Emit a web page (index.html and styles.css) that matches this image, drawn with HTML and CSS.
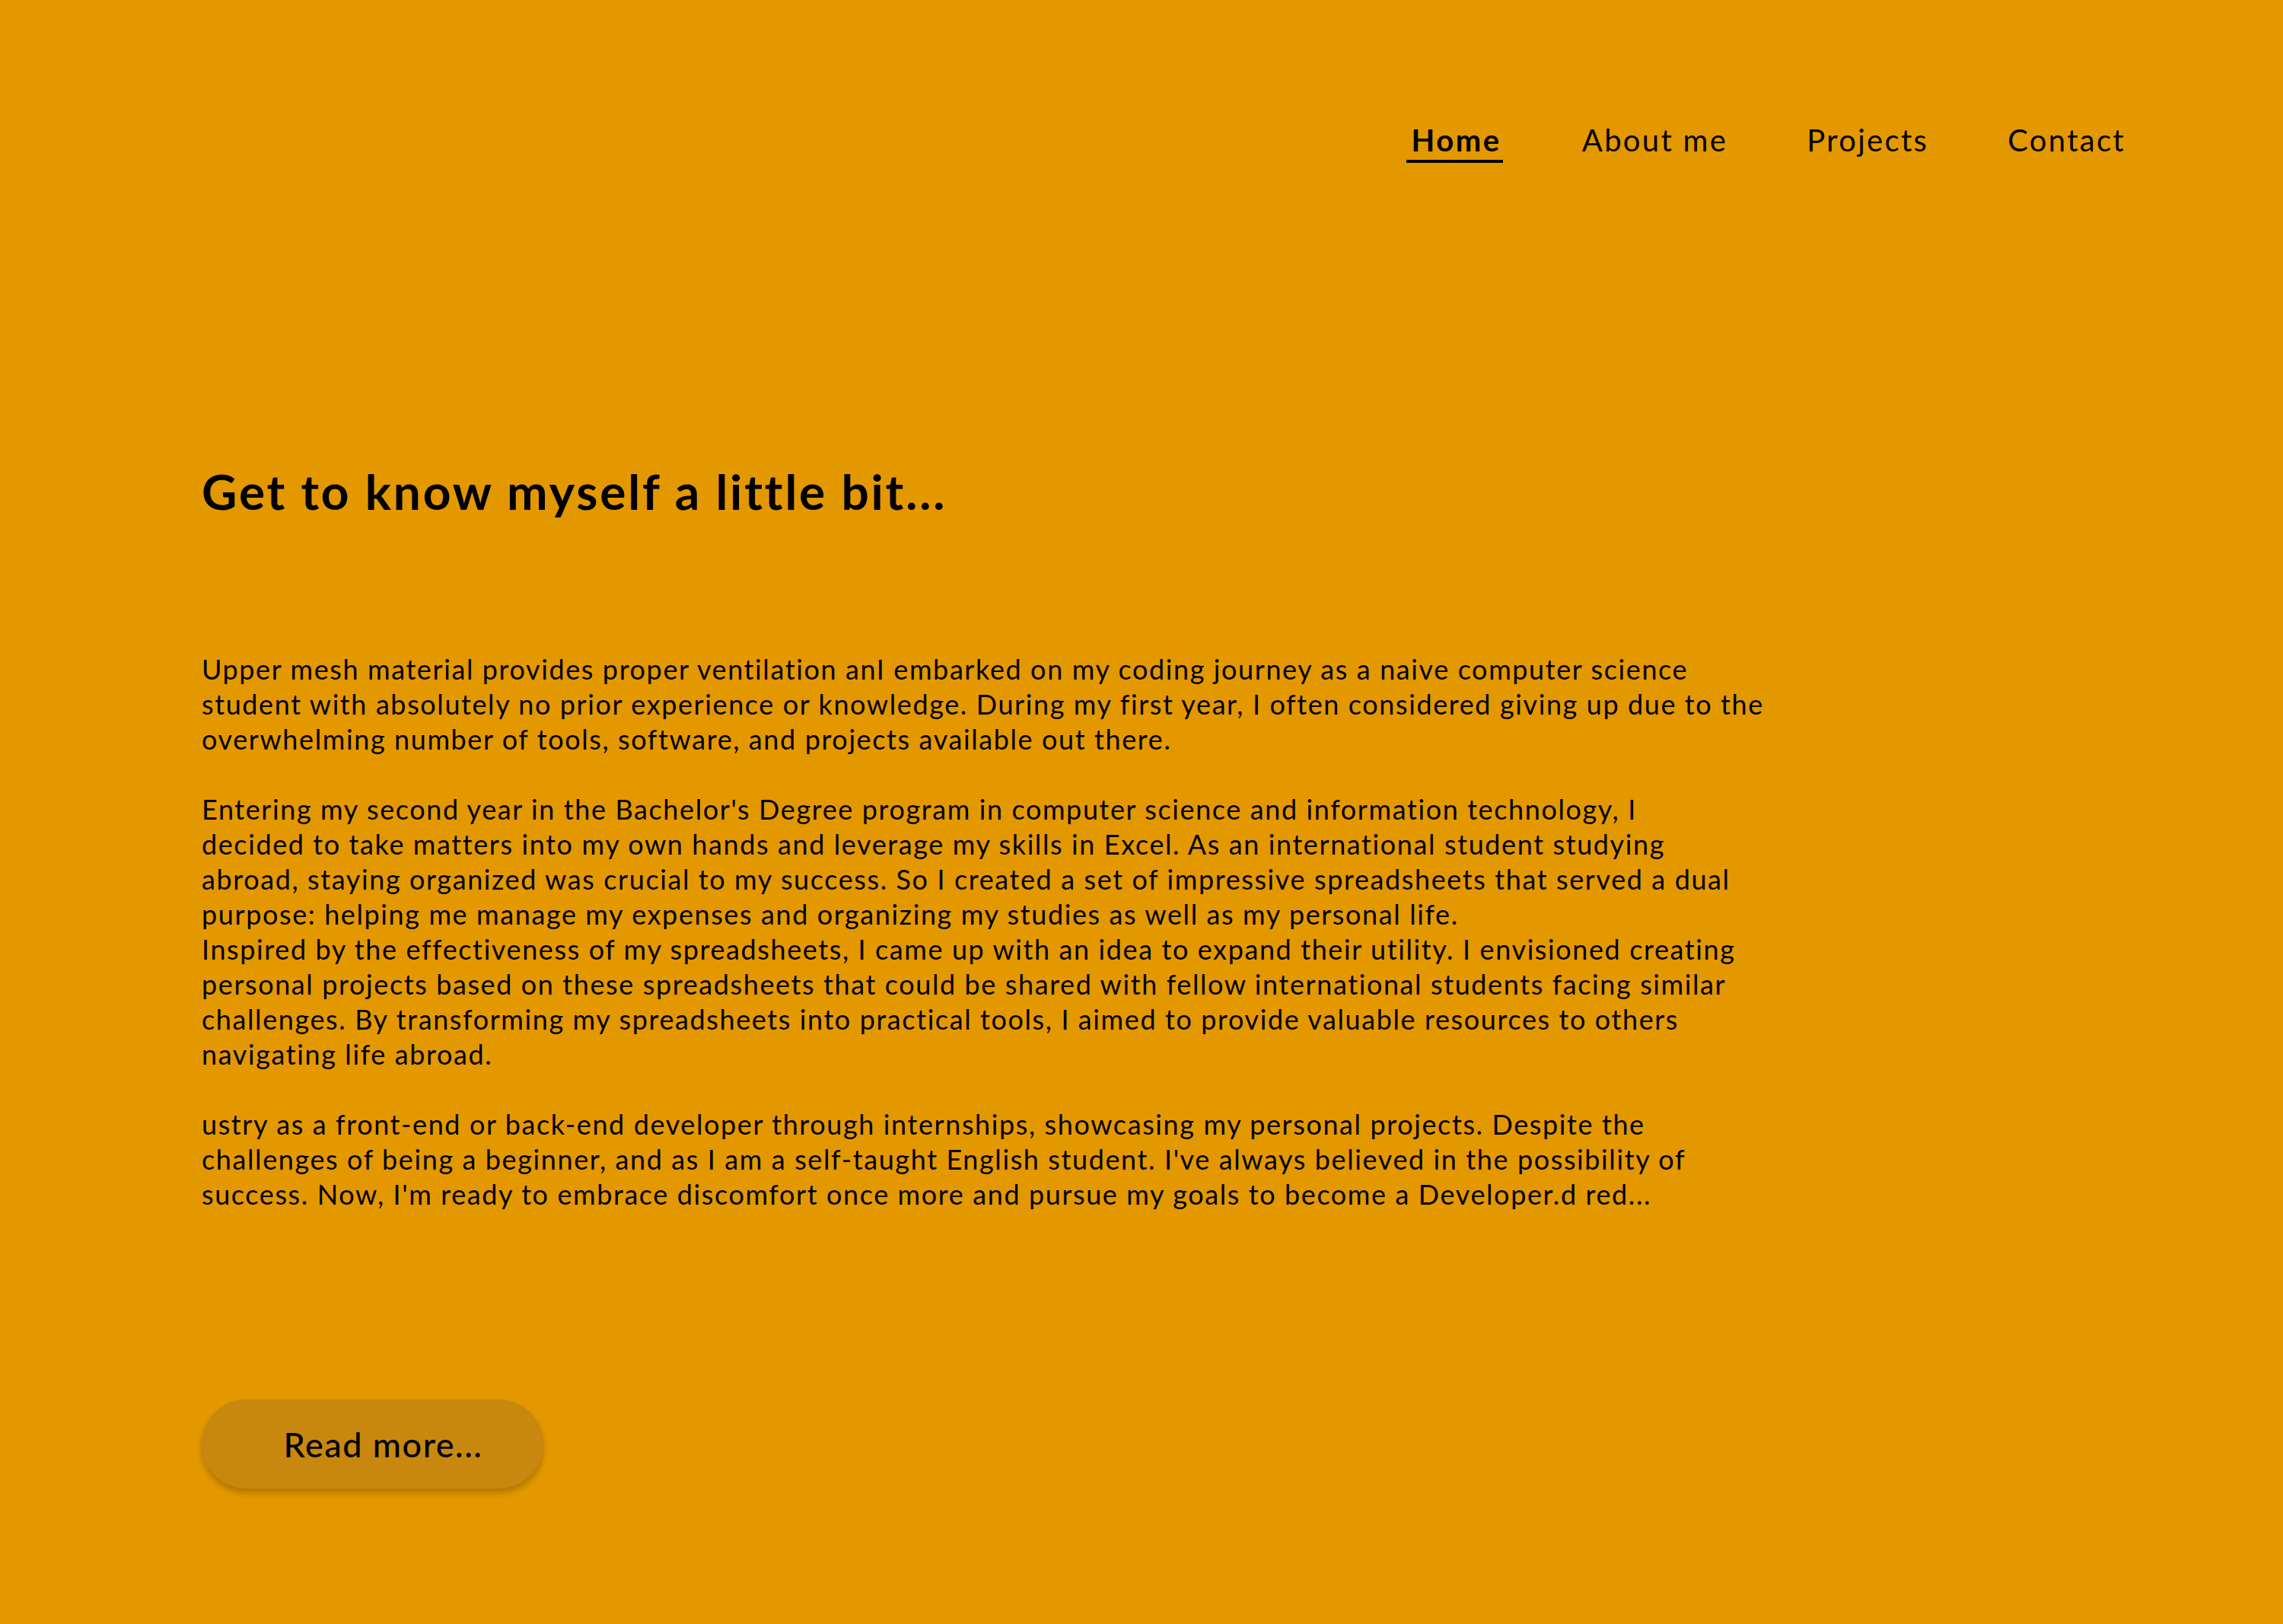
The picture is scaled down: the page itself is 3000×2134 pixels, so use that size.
FILE: index.html
```html
<!DOCTYPE html>
<html lang="en">
<head>
<meta charset="utf-8">
<title>About me</title>
<link rel="stylesheet" href="styles.css">
</head>
<body>
<header class="site-header">
  <nav class="nav">
    <a class="nav-link active" href="#">Home</a>
    <a class="nav-link" href="#">About me</a>
    <a class="nav-link" href="#">Projects</a>
    <a class="nav-link" href="#">Contact</a>
  </nav>
</header>
<main class="about">
  <h1 class="about-title">Get to know myself a little bit...</h1>
  <div class="about-text">
    <p>Upper mesh material provides proper ventilation anI embarked on my coding journey as a naive computer science<br>
    student with absolutely no prior experience or knowledge. During my first year, I often considered giving up due to the<br>
    overwhelming number of tools, software, and projects available out there.</p>
    <p>Entering my second year in the Bachelor's Degree program in computer science and information technology, I<br>
    decided to take matters into my own hands and leverage my skills in Excel. As an international student studying<br>
    abroad, staying organized was crucial to my success. So I created a set of impressive spreadsheets that served a dual<br>
    purpose: helping me manage my expenses and organizing my studies as well as my personal life.<br>
    Inspired by the effectiveness of my spreadsheets, I came up with an idea to expand their utility. I envisioned creating<br>
    personal projects based on these spreadsheets that could be shared with fellow international students facing similar<br>
    challenges. By transforming my spreadsheets into practical tools, I aimed to provide valuable resources to others<br>
    navigating life abroad.</p>
    <p>ustry as a front-end or back-end developer through internships, showcasing my personal projects. Despite the<br>
    challenges of being a beginner, and as I am a self-taught English student. I've always believed in the possibility of<br>
    success. Now, I'm ready to embrace discomfort once more and pursue my goals to become a Developer.d red...</p>
  </div>
  <button class="read-more" type="button">Read more...</button>
</main>
</body>
</html>
```
FILE: styles.css
```css
html, body {
  margin: 0;
  padding: 0;
}
body {
  background: #e49800;
  color: #000;
  font-family: Lato, "Open Sans", sans-serif;
  min-height: 2134px;
}
.site-header {
  display: flex;
  justify-content: flex-end;
  padding: 160px 207px 0 0;
}
.nav {
  display: flex;
  align-items: flex-start;
  gap: 104px;
}
.nav-link {
  color: #000;
  text-decoration: none;
  font-size: 40px;
  line-height: 48px;
  letter-spacing: 2.3px;
}
.nav-link.active {
  font-weight: 700;
  letter-spacing: 2.6px;
  padding: 0 2px 2px 6px;
  border-bottom: 4px solid #000;
}
.about {
  padding: 392px 0 0 265px;
}
.about-title {
  margin: 0;
  font-size: 64px;
  line-height: 80px;
  font-weight: 700;
  letter-spacing: 2.8px;
}
.about-text {
  margin-top: 170px;
  width: 2400px;
}
.about-text p {
  margin: 0 0 46px;
  font-size: 36px;
  line-height: 46px;
  font-weight: 400;
  letter-spacing: 1.6px;
}
.about-text p:last-child {
  margin-bottom: 0;
}
.read-more {
  margin-top: 247px;
  width: 449px;
  height: 117px;
  border: none;
  border-radius: 59px;
  background: #c8880f;
  color: #000;
  font-family: Lato, "Open Sans", sans-serif;
  font-size: 45px;
  font-weight: 500;
  letter-spacing: 1.5px;
  padding: 0 0 0 28px;
  box-shadow: 0 6px 8px rgba(0, 0, 0, 0.22);
  cursor: pointer;
}
```
